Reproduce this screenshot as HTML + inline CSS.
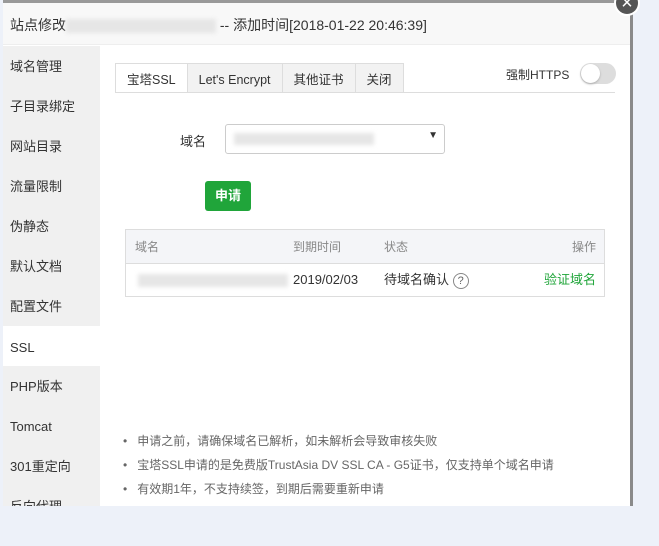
<!DOCTYPE html>
<html><head><meta charset="utf-8"><style>
*{box-sizing:border-box;margin:0;padding:0}
body{width:659px;height:546px;background:#edf1f9;position:relative;overflow:hidden;font-family:"Liberation Sans","Noto Sans CJK SC",sans-serif;font-size:12px;color:#333}
.dlg{position:absolute;left:3px;top:0;width:630px;height:506px;background:#fff;border-top:3px solid #999;border-right:3px solid #8a8a8a;overflow:hidden}
.title{height:42px;background:#f8f8f8;border-bottom:1px solid #eee;padding-left:7px;line-height:44px;font-size:14px;color:#333}
.blur{display:inline-block;background:#e6e6e6;filter:blur(2px);vertical-align:middle}
.side{position:absolute;left:0;top:43px;width:97px;bottom:0;background:#f0f0f0}
.side div{height:40px;line-height:42px;padding-left:7px;font-size:13px;color:#333}
.side .act{background:#fff;line-height:44px}
.tabs{position:absolute;left:112px;top:60px;height:30px;display:flex}
.tab{height:30px;line-height:33px;padding:0 11px;border:1px solid #ddd;background:#f2f2f2;margin-right:-1px;font-size:12.5px}
.tab.on{background:#fff;border-bottom-color:#fff}
.line{position:absolute;left:112px;top:89px;width:500px;border-top:1px solid #ddd}
.sw{position:absolute;left:577px;top:60px;width:36px;height:21px;border-radius:11px;background:#ddd}
.sw:after{content:"";position:absolute;left:1px;top:1px;width:19px;height:19px;border-radius:50%;background:#fff;box-shadow:0 1px 2px #aaa}
.close{position:absolute;left:614px;top:-10px;width:26px;height:26px;border-radius:50%;background:#555;border:2px solid #fff;color:#fff;font-size:20px;text-align:center;line-height:22px}
</style></head><body>
<div class="dlg">
<div class="title">站点修改<span class="blur" style="width:150px;height:14px"></span> -- 添加时间[2018-01-22 20:46:39]</div>
<div class="side">
<div>域名管理</div><div>子目录绑定</div><div>网站目录</div><div>流量限制</div><div>伪静态</div><div>默认文档</div><div>配置文件</div><div class="act">SSL</div><div>PHP版本</div><div>Tomcat</div><div>301重定向</div><div>反向代理</div>
</div>
<div class="tabs"><div class="tab on">宝塔SSL</div><div class="tab">Let's Encrypt</div><div class="tab">其他证书</div><div class="tab">关闭</div></div>
<div class="line"></div>
<div style="position:absolute;left:503px;top:63px;font-size:12px">强制HTTPS</div>
<div class="sw"></div>
<div style="position:absolute;left:177px;top:128px;font-size:13px">域名</div>
<div style="position:absolute;left:222px;top:121px;width:220px;height:30px;border:1px solid #ccc;border-radius:3px"><span class="blur" style="position:absolute;left:8px;top:8px;width:140px;height:12px"></span><span style="position:absolute;right:6px;top:5px;font-size:10px">▼</span></div>
<div style="position:absolute;left:202px;top:178px;width:46px;height:30px;background:#20a53a;border-radius:3px;color:#fff;font-size:13px;font-weight:bold;text-align:center;line-height:30px">申请</div>
<div style="position:absolute;left:122px;top:226px;width:480px;height:68px;border:1px solid #ddd">
<div style="height:34px;background:#f4f5f8;border-bottom:1px solid #ddd;color:#888;line-height:34px;position:relative">
<span style="position:absolute;left:9px">域名</span><span style="position:absolute;left:167px">到期时间</span><span style="position:absolute;left:258px">状态</span><span style="position:absolute;right:8px">操作</span></div>
<div style="height:33px;line-height:31px;position:relative;font-size:13px">
<span class="blur" style="position:absolute;left:12px;top:10px;width:150px;height:13px"></span>
<span style="position:absolute;left:167px">2019/02/03</span><span style="position:absolute;left:258px">待域名确认 <span style="display:inline-block;width:16px;height:16px;border:1px solid #888;border-radius:50%;text-align:center;line-height:14px;font-size:11px;color:#666">?</span></span><span style="position:absolute;right:8px;color:#20a53a">验证域名</span></div>
</div>
<div style="position:absolute;left:120px;top:426px;color:#666;font-size:12px;line-height:24px">
<div>•&nbsp;&nbsp; 申请之前，请确保域名已解析，如未解析会导致审核失败</div>
<div>•&nbsp;&nbsp; 宝塔SSL申请的是免费版TrustAsia DV SSL CA - G5证书，仅支持单个域名申请</div>
<div>•&nbsp;&nbsp; 有效期1年，不支持续签，到期后需要重新申请</div>
</div>
</div>
<div class="close">×</div>
</body></html>
